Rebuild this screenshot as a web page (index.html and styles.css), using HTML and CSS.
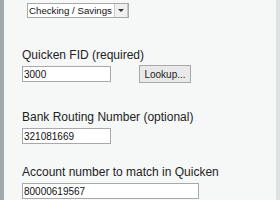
FILE: index.html
```html
<!DOCTYPE html>
<html>
<head>
    <title>Account Settings</title>
    <link rel="stylesheet" href="styles.css">
</head>
<body>
    <div class="page">
        <div class="rail-left"></div>
        <div class="main">
            <div class="select">
                <span class="select-text">Checking / Savings</span>
                <span class="select-arrow"></span>
            </div>

            <div class="field field-fid">
                <div class="label">Quicken FID (required)</div>
                <div class="row">
                    <input class="input input-short" type="text" value="3000">
                    <button class="lookup">Lookup...</button>
                </div>
            </div>

            <div class="field field-routing">
                <div class="label">Bank Routing Number (optional)</div>
                <input class="input input-short" type="text" value="321081669">
            </div>

            <div class="field">
                <div class="label">Account number to match in Quicken</div>
                <input class="input input-long" type="text" value="80000619567">
            </div>
        </div>
        <div class="rail-right"></div>
    </div>
</body>
</html>
```

FILE: styles.css
```css
body {
    margin: 0;
    font-family: "Liberation Sans", Arial, sans-serif;
    background-color: #f6f8f8;
    color: #222;
}

.page {
    display: flex;
    height: 200px;
    overflow: hidden;
}

.rail-left {
    width: 4px;
    background-color: #a2a7aa;
}

.rail-right {
    width: 4px;
    background-color: #dfe2e4;
}

.main {
    flex: 1;
    padding: 3px 0 0 18px;
}

.select {
    display: flex;
    width: fit-content;
    margin-left: 5px;
    height: 15px;
    border: 1px solid #a9a9a9;
    background-color: #fff;
    box-sizing: border-box;
}

.select-text {
    width: 85px;
    padding-left: 1px;
    white-space: nowrap;
    overflow: hidden;
    font-size: 9.7px;
    line-height: 13px;
    color: #111;
}

.select-arrow {
    position: relative;
    width: 12px;
    border: 1px solid #c9c9c9;
    border-top: none;
    border-bottom: none;
    background-color: #f0f0f0;
}

.select-arrow::after {
    content: "";
    position: absolute;
    left: 3px;
    top: 5px;
    border-left: 3px solid transparent;
    border-right: 3px solid transparent;
    border-top: 3px solid #333;
}

.field {
    margin-top: 21px;
}

.field-fid {
    margin-top: 30px;
}

.field-routing {
    margin-top: 27px;
}

.label {
    font-size: 12px;
    line-height: 14px;
}

.row {
    display: flex;
    align-items: flex-start;
}

.input {
    display: block;
    margin: 4px 0 0 0;
    height: 16px;
    padding: 0 1px;
    box-sizing: border-box;
    border: 1px solid #a9a9a9;
    background-color: #fff;
    font-family: "Liberation Sans", Arial, sans-serif;
    font-size: 10px;
    color: #111;
}

.input-short {
    width: 89px;
}

.input-long {
    width: 177px;
}

.lookup {
    margin: 3px 0 0 28px;
    width: 52px;
    height: 18px;
    padding: 0;
    border: 1px solid #a9a9a9;
    background-color: #e9e9e9;
    font-family: "Liberation Sans", Arial, sans-serif;
    font-size: 10px;
    color: #222;
}
```
